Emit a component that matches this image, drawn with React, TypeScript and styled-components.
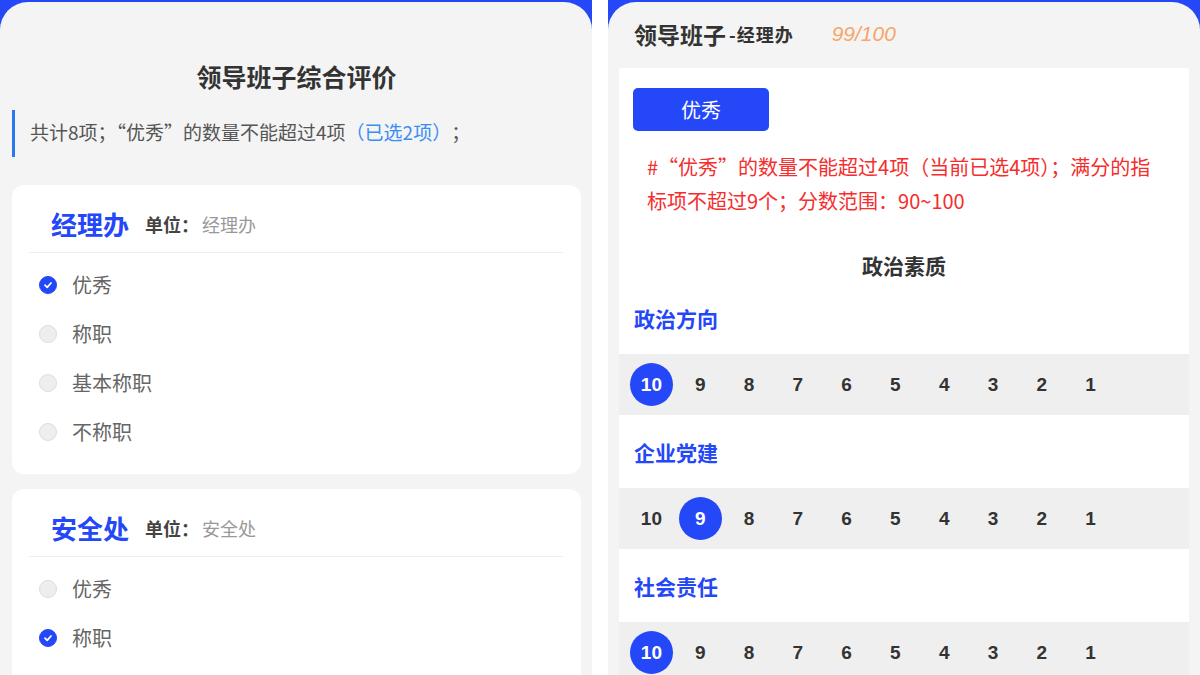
import styled, { createGlobalStyle } from 'styled-components';

const BLUE = '#2447f7';

const GlobalStyle = createGlobalStyle`
    html, body {
        margin: 0;
        padding: 0;
        background: #fff;
        font-family: "Noto Sans CJK SC", "Liberation Sans", sans-serif;
        color: #333;
    }
    #root {
        width: 1200px;
        height: 675px;
        overflow: hidden;
    }
`

const Page = styled.div`
    display: flex;
    gap: 16px;
    width: 1200px;
    height: 675px;
`

const Panel = styled.div`
    flex: 0 0 592px;
    height: 100%;
    background: ${BLUE};
    padding-top: 2px;
    box-sizing: border-box;
    overflow: hidden;
`

const Sheet = styled.div`
    height: 100%;
    background: #f4f4f4;
    border-radius: 28px 28px 0 0;
    box-sizing: border-box;
    overflow: hidden;
`

/* ---------- left ---------- */

const LeftSheet = styled(Sheet)`
    padding: 0 11px 0 12px;
`

const Title = styled.h1`
    margin: 58px 0 0;
    height: 34px;
    line-height: 32px;
    text-align: center;
    font-size: 25px;
    font-weight: 700;
    color: #333;
`

const Note = styled.div`
    margin: 16px 0 28px;
    height: 47px;
    box-sizing: border-box;
    padding: 0 0 4px 15px;
    display: flex;
    align-items: center;
    border-left: 3px solid #2a78f0;
    font-size: 19px;
    color: #555;
`

const Picked = styled.span`
    color: #3a8df5;
`

const Card = styled.div`
    background: #fff;
    border-radius: 12px;
    margin-bottom: 15px;
    padding-bottom: 18px;
`

const CardHead = styled.div`
    display: flex;
    align-items: center;
    margin: 0 18px 0 17px;
    padding: 24px 0 13px 22px;
    border-bottom: 1px solid #eee;
`

const Dept = styled.span`
    font-size: 26px;
    line-height: 30px;
    font-weight: 700;
    color: ${BLUE};
`

const UnitLabel = styled.span`
    margin-left: 16px;
    font-size: 18px;
    font-weight: 700;
    color: #444;
`

const UnitValue = styled.span`
    margin-left: 3px;
    font-size: 18px;
    color: #999;
`

const Options = styled.div`
    padding: 7px 0 0 27px;
`

const Option = styled.div`
    display: flex;
    align-items: center;
    height: 49px;
    gap: 15px;
    font-size: 20px;
    color: #666;
`

const Dot = styled.span<{ $on?: boolean }>`
    width: 18px;
    height: 18px;
    border-radius: 50%;
    box-sizing: border-box;
    display: flex;
    align-items: center;
    justify-content: center;
    background: ${p => (p.$on ? BLUE : '#eee')};
    border: 1px solid ${p => (p.$on ? BLUE : '#ddd')};
`

/* ---------- right ---------- */

const RightHead = styled.div`
    display: flex;
    align-items: center;
    height: 66px;
    padding: 0 0 3px 26px;
    box-sizing: border-box;
`

const HeadMain = styled.span`
    font-size: 23px;
    font-weight: 700;
    color: #333;
`

const HeadSub = styled.span`
    margin-left: 3px;
    font-size: 18px;
    font-weight: 700;
    color: #333;
    letter-spacing: 1px;
`

const HeadScore = styled.span`
    margin-left: 38px;
    font-family: "Liberation Sans", sans-serif;
    font-size: 21px;
    font-style: italic;
    color: #f7a56a;
`

const Body = styled.div`
    margin: 0 11px;
    background: #fff;
    padding-top: 20px;
    min-height: 620px;
`

const LevelButton = styled.button`
    display: block;
    margin-left: 14px;
    width: 136px;
    height: 43px;
    border: none;
    border-radius: 5px;
    background: ${BLUE};
    color: #fff;
    font-family: inherit;
    font-size: 20px;
`

const Warning = styled.p`
    margin: 19px 0 0;
    padding: 0 20px 0 28px;
    font-size: 20px;
    line-height: 34px;
    color: #f52d2d;
`

const Section = styled.h2`
    margin: 27px 0 -4px;
    height: 40px;
    line-height: 40px;
    text-align: center;
    font-size: 21px;
    font-weight: 700;
    color: #333;
`

const ItemLabel = styled.div`
    margin: 23px 0 22px;
    padding-left: 15px;
    height: 28px;
    line-height: 28px;
    font-size: 21px;
    font-weight: 700;
    color: ${BLUE};
`

const ScoreRow = styled.div`
    display: flex;
    align-items: center;
    height: 61px;
    padding-left: 8px;
    background: #efefef;
`

const Score = styled.span<{ $on?: boolean }>`
    flex: 0 0 48.8px;
    display: flex;
    align-items: center;
    justify-content: center;
    font-family: "Liberation Sans", sans-serif;
    font-size: 19px;
    font-weight: 700;
    color: #333;
    span {
        width: 43px;
        height: 43px;
        border-radius: 50%;
        display: flex;
        align-items: center;
        justify-content: center;
        background: ${p => (p.$on ? BLUE : 'transparent')};
        color: ${p => (p.$on ? '#fff' : '#333')};
    }
`

const Check = () => (
    <svg width="10" height="10" viewBox="0 0 10 10">
        <path d="M2 5.2 L4.2 7.3 L8 3" fill="none" stroke="#fff" strokeWidth="1.8" strokeLinecap="round" strokeLinejoin="round" />
    </svg>
);

const levels = ['优秀', '称职', '基本称职', '不称职'];

const cards = [
    { name: '经理办', picked: 0 },
    { name: '安全处', picked: 1 },
];

const items = [
    { label: '政治方向', score: 10 },
    { label: '企业党建', score: 9 },
    { label: '社会责任', score: 10 },
];

const scores = [10, 9, 8, 7, 6, 5, 4, 3, 2, 1];

const App = () => {
    return (
        <>
            <GlobalStyle />
            <Page>
                <Panel>
                    <LeftSheet>
                        <Title>领导班子综合评价</Title>
                        <Note>
                            共计8项；“优秀”的数量不能超过4项<Picked>（已选2项）</Picked>；
                        </Note>
                        {cards.map(c => (
                            <Card key={c.name}>
                                <CardHead>
                                    <Dept>{c.name}</Dept>
                                    <UnitLabel>单位：</UnitLabel>
                                    <UnitValue>{c.name}</UnitValue>
                                </CardHead>
                                <Options>
                                    {levels.map((l, i) => (
                                        <Option key={l}>
                                            <Dot $on={i === c.picked}>{i === c.picked && <Check />}</Dot>
                                            {l}
                                        </Option>
                                    ))}
                                </Options>
                            </Card>
                        ))}
                    </LeftSheet>
                </Panel>

                <Panel>
                    <Sheet>
                        <RightHead>
                            <HeadMain>领导班子</HeadMain>
                            <HeadSub>-经理办</HeadSub>
                            <HeadScore>99/100</HeadScore>
                        </RightHead>
                        <Body>
                            <LevelButton>优秀</LevelButton>
                            <Warning>
                                #“优秀”的数量不能超过4项（当前已选4项）；满分的指标项不超过9个；分数范围：90~100
                            </Warning>
                            <Section>政治素质</Section>
                            {items.map(it => (
                                <div key={it.label}>
                                    <ItemLabel>{it.label}</ItemLabel>
                                    <ScoreRow>
                                        {scores.map(s => (
                                            <Score key={s} $on={s === it.score}>
                                                <span>{s}</span>
                                            </Score>
                                        ))}
                                    </ScoreRow>
                                </div>
                            ))}
                        </Body>
                    </Sheet>
                </Panel>
            </Page>
        </>
    );
};

export default App
